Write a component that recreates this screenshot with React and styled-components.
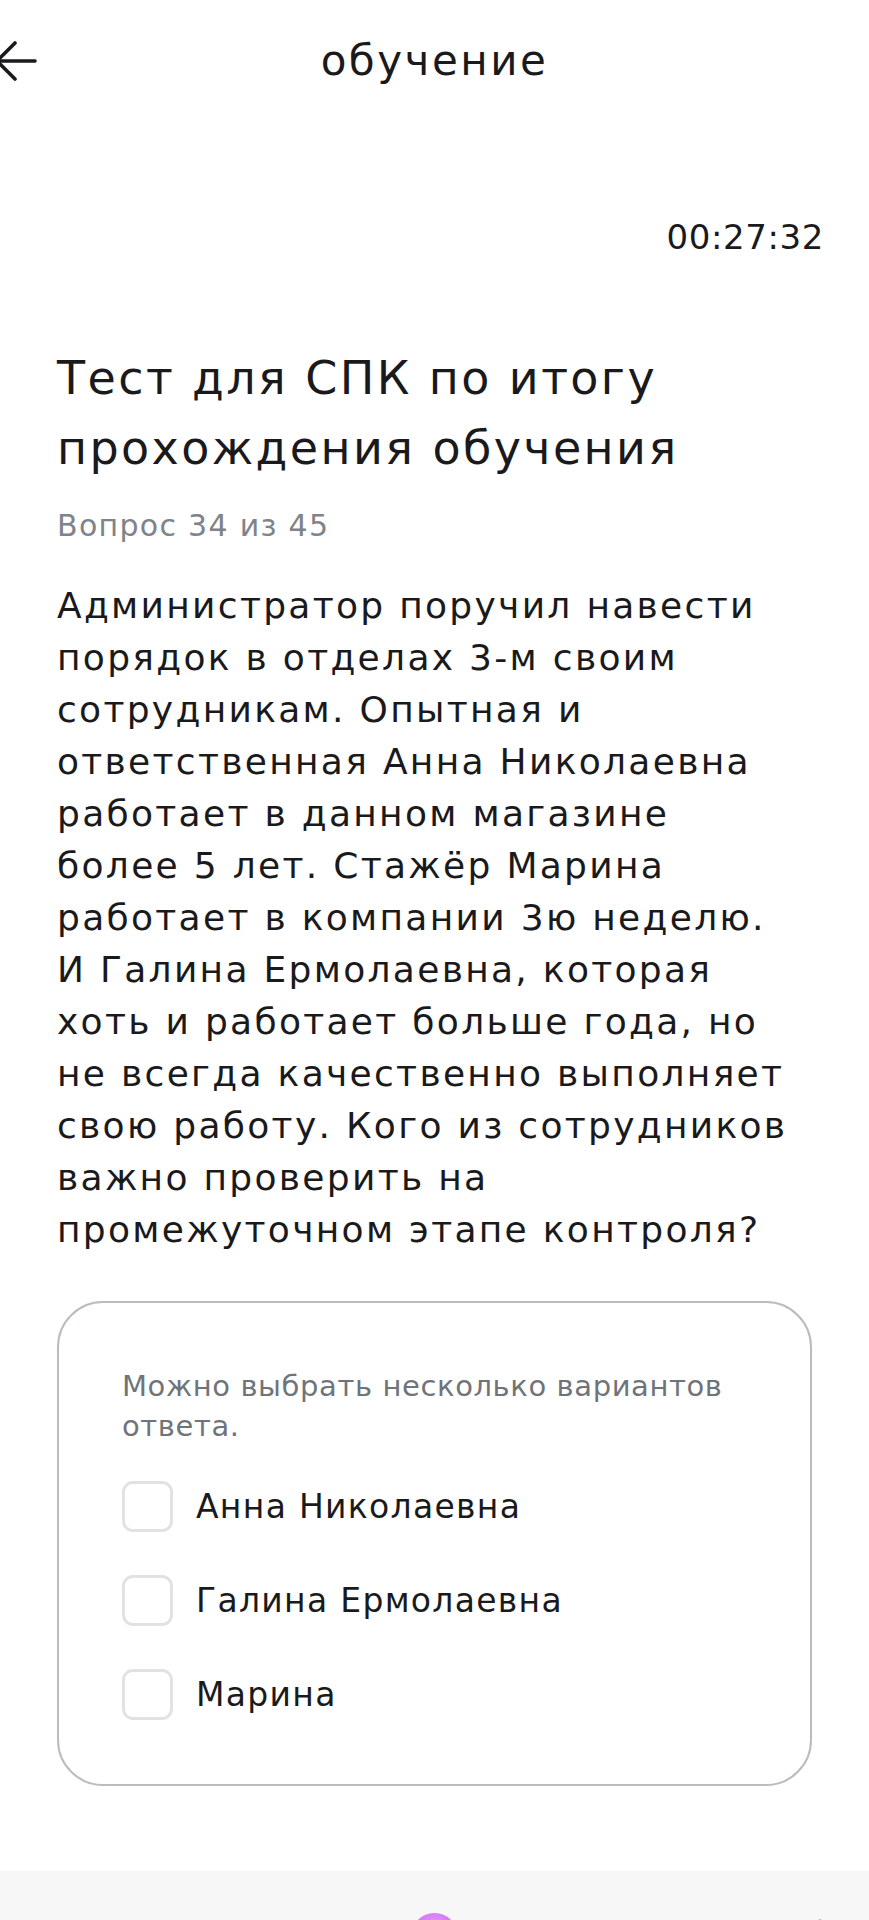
import React from 'react';
import styled, { createGlobalStyle } from 'styled-components';

const GlobalStyle = createGlobalStyle`
  html, body {
    margin: 0;
    padding: 0;
    background: #ffffff;
  }
  body {
    font-family: "DejaVu Sans", "Noto Sans", sans-serif;
    color: #1a1a1c;
  }
`;

const Page = styled.div`
  width: 869px;
  min-height: 1920px;
  display: flex;
  flex-direction: column;
  overflow: hidden;
`;

const Header = styled.header`
  height: 122px;
  display: grid;
  grid-template-columns: 1fr auto 1fr;
  align-items: center;
`;

const BackButton = styled.button`
  justify-self: start;
  width: 44px;
  height: 44px;
  margin-left: -6px;
  padding: 0;
  border: 0;
  background: none;
  color: #1a1a1c;
  display: flex;
`;

const HeaderTitle = styled.h1`
  margin: 0;
  font-size: 42px;
  font-weight: 400;
  letter-spacing: 2.5px;
  line-height: 50px;
`;

const Content = styled.main`
  padding: 0 57px;
  display: flex;
  flex-direction: column;
`;

const Timer = styled.div`
  align-self: flex-end;
  margin: 95px -12px 0 0;
  font-size: 34px;
  line-height: 40px;
  letter-spacing: 0.6px;
`;

const TestTitle = styled.h2`
  margin: 86px 0 0;
  font-size: 46px;
  font-weight: 400;
  line-height: 70px;
  letter-spacing: 2.4px;
`;

const Counter = styled.div`
  margin-top: 23px;
  font-size: 30px;
  line-height: 40px;
  letter-spacing: 1.3px;
  color: #808389;
`;

const Question = styled.p`
  margin: 34px 0 0;
  font-size: 36px;
  line-height: 52px;
  letter-spacing: 2.3px;
  white-space: nowrap;
`;

const Card = styled.section`
  margin-top: 45px;
  border: 2px solid #b9bcc2;
  border-radius: 46px;
  padding: 63px 63px 64px;
  display: flex;
  flex-direction: column;
`;

const Hint = styled.div`
  font-size: 29px;
  line-height: 40px;
  letter-spacing: 0.6px;
  color: #6f747b;
  margin-bottom: 35px;
`;

const Options = styled.div`
  display: flex;
  flex-direction: column;
  gap: 43px;
`;

const Option = styled.label`
  display: flex;
  align-items: center;
  gap: 23px;
  font-size: 33px;
  letter-spacing: 1.3px;
  line-height: 51px;
`;

const Box = styled.span`
  width: 51px;
  height: 51px;
  box-sizing: border-box;
  border: 3px solid #e2e2e4;
  border-radius: 11px;
  background: #ffffff;
  flex-shrink: 0;
`;

const BottomBar = styled.nav`
  margin-top: 85px;
  height: 50px;
  background: #f7f7f8;
  display: grid;
  grid-template-columns: 1fr auto 1fr;
  align-items: start;
  padding-top: 42px;
  box-sizing: border-box;
  overflow: hidden;
`;

const Fab = styled.span`
  grid-column: 2;
  width: 47px;
  height: 47px;
  border-radius: 50%;
  background: radial-gradient(circle at 50% 30%, #e79cff 0%, #cf6df2 55%, #b553e0 100%);
`;

const NavIcon = styled.span`
  grid-column: 3;
  justify-self: end;
  margin: 5px 37px 0 0;
  display: flex;
  color: #1a1a1c;
`;

const questionLines = [
  'Администратор поручил навести',
  'порядок в отделах 3-м своим',
  'сотрудникам. Опытная и',
  'ответственная Анна Николаевна',
  'работает в данном магазине',
  'более 5 лет. Стажёр Марина',
  'работает в компании 3ю неделю.',
  'И Галина Ермолаевна, которая',
  'хоть и работает больше года, но',
  'не всегда качественно выполняет',
  'свою работу. Кого из сотрудников',
  'важно проверить на',
  'промежуточном этапе контроля?',
];

const answers = ['Анна Николаевна', 'Галина Ермолаевна', 'Марина'];

const App = () => (
  <Page>
    <GlobalStyle />
    <Header>
      <BackButton aria-label="Назад">
        <svg width="44" height="44" viewBox="0 0 44 44" fill="none" stroke="currentColor" strokeWidth="3.6" strokeLinecap="round" strokeLinejoin="round">
          <path d="M41 22H4" />
          <path d="M21 4L3 22L21 40" />
        </svg>
      </BackButton>
      <HeaderTitle>обучение</HeaderTitle>
    </Header>
    <Content>
      <Timer>00:27:32</Timer>
      <TestTitle>
        Тест для СПК по итогу
        <br />
        прохождения обучения
      </TestTitle>
      <Counter>Вопрос 34 из 45</Counter>
      <Question>
        {questionLines.map((line, i) => (
          <React.Fragment key={line}>
            {line}
            {i < questionLines.length - 1 && <br />}
          </React.Fragment>
        ))}
      </Question>
      <Card>
        <Hint>
          Можно выбрать несколько вариантов
          <br />
          ответа.
        </Hint>
        <Options>
          {answers.map((a) => (
            <Option key={a}>
              <Box />
              {a}
            </Option>
          ))}
        </Options>
      </Card>
    </Content>
    <BottomBar>
      <Fab />
      <NavIcon>
        <svg width="24" height="24" viewBox="0 0 24 24" fill="none" stroke="currentColor" strokeWidth="2.6">
          <circle cx="12" cy="9" r="6" />
        </svg>
      </NavIcon>
    </BottomBar>
  </Page>
);

export default App;
